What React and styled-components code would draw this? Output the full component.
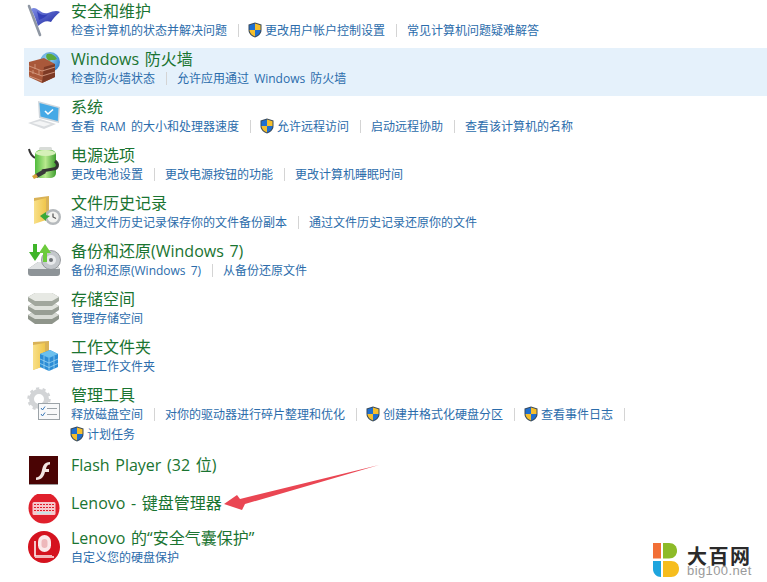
import React from 'react';
import styled, { createGlobalStyle } from 'styled-components';

const GlobalStyle = createGlobalStyle`
  html, body {
    margin: 0;
    padding: 0;
    background: #ffffff;
    overflow: hidden;
  }
  body {
    font-family: "Open Sans", "Noto Sans CJK SC", sans-serif;
  }
`;

const Page = styled.div`
  position: relative;
  width: 767px;
  height: 582px;
  overflow: hidden;
`;

const List = styled.div`
  display: flex;
  flex-direction: column;
  padding-left: 24px;
`;

const Row = styled.div`
  display: flex;
  align-items: flex-start;
  height: ${(p) => p.$height || 48}px;
  padding-left: 2px;
  background: ${(p) => (p.$active ? '#e5f1fb' : 'transparent')};
`;

const IconBox = styled.div`
  flex: none;
  width: 36px;
  height: 36px;
  margin: 2px 9px 0 0;
  svg {
    display: block;
  }
`;

const Content = styled.div`
  display: flex;
  flex-direction: column;
  max-width: 565px;
`;

const Title = styled.div`
  font-size: 16px;
  line-height: 23px;
  height: 20px;
  word-spacing: 1.5px;
  color: #1a7431;
  white-space: nowrap;
`;

const Links = styled.div`
  display: flex;
  flex-wrap: wrap;
`;

const LinkItem = styled.div`
  display: flex;
  align-items: center;
  height: 20px;
  font-size: 12px;
  word-spacing: 2px;
  color: #2b6cab;
  white-space: nowrap;

  &:not(:last-child)::after {
    content: '';
    width: 1px;
    height: 13px;
    margin: 0 10px 0 11px;
    background: #d4d4d4;
  }
`;

const ShieldIcon = styled.svg`
  flex: none;
  width: 14px;
  height: 16px;
  margin: 0 3px 0 -1px;
`;

const Arrow = styled.svg`
  position: absolute;
  left: 220px;
  top: 460px;
`;

const Watermark = styled.div`
  position: absolute;
  left: 653px;
  top: 543px;
  display: flex;
  gap: 8px;
`;

const WatermarkText = styled.div`
  display: flex;
  flex-direction: column;
  padding-top: 4px;
`;

const BrandName = styled.div`
  font-family: "Noto Sans CJK SC", sans-serif;
  font-size: 20px;
  font-weight: 700;
  line-height: 17px;
  letter-spacing: 1.5px;
  color: #2a2a2a;
`;

const BrandUrl = styled.div`
  font-family: "Liberation Sans", sans-serif;
  font-size: 13px;
  line-height: 13px;
  letter-spacing: 0.4px;
  color: #9a9a9a;
`;

function Shield() {
  return (
    <ShieldIcon viewBox="0 0 14 16">
      <path d="M7 0.5 L13.5 2.5 V8 C13.5 12 10 14.5 7 15.5 C4 14.5 0.5 12 0.5 8 V2.5 Z" fill="#3a4a5a" />
      <path d="M7 1.5 V8 H1.5 V3.2 Z" fill="#1f6fd0" />
      <path d="M7 1.5 L12.5 3.2 V8 H7 Z" fill="#f6bf2c" />
      <path d="M1.5 8 H7 V14.4 C4.5 13.5 1.7 11.5 1.5 8 Z" fill="#f6bf2c" />
      <path d="M7 8 H12.5 C12.3 11.5 9.5 13.5 7 14.4 Z" fill="#1f6fd0" />
    </ShieldIcon>
  );
}

const Svg = ({ children }) => (
  <svg width="36" height="36" viewBox="0 0 36 36">
    {children}
  </svg>
);

const icons = {
  flag: (
    <Svg>
      <defs>
        <linearGradient id="flagBlue" x1="0" y1="0" x2="1" y2="1">
          <stop offset="0" stopColor="#7f8ee6" />
          <stop offset="1" stopColor="#1c26a0" />
        </linearGradient>
      </defs>
      <path d="M3 4 L14 33" stroke="#8f97a3" strokeWidth="2.6" strokeLinecap="round" />
      <path d="M5 7 C11 3 14 13 22 11 C27 9 31 8 34 10 C30 13 27 17 25 20 C20 18 17 20 12 24 C10 18 8 12 5 7 Z" fill="url(#flagBlue)" />
      <path d="M11 9 C14 13 18 14 22 12 C20 15 16 17 13 18 Z" fill="#3440b8" />
    </Svg>
  ),
  firewall: (
    <Svg>
      <defs>
        <radialGradient id="globe" cx="0.4" cy="0.35" r="0.8">
          <stop offset="0" stopColor="#9fd8f5" />
          <stop offset="1" stopColor="#1f72c4" />
        </radialGradient>
      </defs>
      <circle cx="24" cy="12" r="10" fill="url(#globe)" />
      <path d="M21 4 C25 3 29 5 31 9 C28 11 25 9 23 11 C21 9 19 7 21 4 Z" fill="#5aa83c" />
      <path d="M3 12 L18 8 L29 14 L29 27 L16 33 L3 27 Z" fill="#a9583a" />
      <path d="M18 17 L29 14 L29 27 L16 33 Z" fill="#7d3a25" />
      <path d="M3 16 L16 21 M3 21 L16 26 M3 26 L16 31 M9 14 V19 M13 20 V25 M7 20 V24 M16 21 L29 17 M16 26 L29 22" stroke="#d49a80" strokeWidth="0.9" fill="none" />
    </Svg>
  ),
  system: (
    <Svg>
      <path d="M12 3 L34 9 L33 25 L13 20 Z" fill="#cfd6dc" />
      <path d="M13.5 5 L32.5 10 L31.8 23 L14.5 18.5 Z" fill="#45a9e6" />
      <path d="M19 13 L22 16 L27 11.5" stroke="#ffffff" strokeWidth="1.6" fill="none" />
      <path d="M2 25 L14 21 L30 26 L18 31 Z" fill="#d9dcdf" />
      <path d="M6 25 L14 23 L25 26 L18 28.5 Z" fill="#f4f5f6" />
    </Svg>
  ),
  power: (
    <Svg>
      <defs>
        <linearGradient id="battery" x1="0" y1="0" x2="1" y2="0">
          <stop offset="0" stopColor="#4fbb3c" />
          <stop offset="0.5" stopColor="#b8e98e" />
          <stop offset="1" stopColor="#3f9f30" />
        </linearGradient>
      </defs>
      <path d="M3 3 C4 8 6 10 9 12" stroke="#333" strokeWidth="2" fill="none" />
      <rect x="13" y="1" width="13" height="4" rx="1.5" fill="#d8dcd8" />
      <rect x="9" y="4" width="21" height="28" rx="5" fill="url(#battery)" />
      <ellipse cx="19.5" cy="7" rx="10" ry="3" fill="#d5f0b8" />
      <path d="M29 15 C33 18 32 23 27 23 L16 25" stroke="#333" strokeWidth="3" fill="none" />
      <path d="M8 29 L18 23 L20 27 L11 32 Z" fill="#3a3a3a" />
      <path d="M6 30 L10 28 L12 31 L8 33 Z" fill="#d6a23a" />
    </Svg>
  ),
  history: (
    <Svg>
      <defs>
        <linearGradient id="folderA" x1="0" y1="0" x2="1" y2="0">
          <stop offset="0" stopColor="#f8e08a" />
          <stop offset="1" stopColor="#f0c64a" />
        </linearGradient>
      </defs>
      <path d="M8 4 L23 2 V22 L8 29 Z" fill="#d9b257" />
      <path d="M8 7 L20 4 V26 L8 30 Z" fill="url(#folderA)" />
      <circle cx="27" cy="23" r="8" fill="#b5b9bc" />
      <circle cx="27" cy="23" r="5.6" fill="#f3f3f0" />
      <path d="M27 19.5 V23 L30 24.5" stroke="#555" strokeWidth="1.2" fill="none" />
      <path d="M14 22 L20 18 V21 L24 22 L20 25 V27 Z" fill="#3aa83a" />
    </Svg>
  ),
  backup: (
    <Svg>
      <path d="M2 27 L12 20 H28 L34 27 V31 C34 33 33 34 31 34 H5 C3 34 2 33 2 31 Z" fill="#8e9498" />
      <path d="M2 27 L12 20 H28 L34 27 Z" fill="#dfe2e3" />
      <circle cx="25" cy="18" r="9.5" fill="#c3c7cb" stroke="#85898d" strokeWidth="0.8" />
      <circle cx="25" cy="18" r="5" fill="#e8eaec" />
      <circle cx="25" cy="18" r="2" fill="#6d7276" />
      <path d="M7 2 V10 H3 L9 19 L15 10 H11 V2 Z" fill="#3fb52a" />
      <path d="M17 20 V11 H13 L19 2 L25 11 H21 V20 Z" fill="#6ccb3c" />
    </Svg>
  ),
  storage: (
    <Svg>
      <path d="M2 25 L9 21 H26 L33 25 V29 L26 34 H9 L2 29 Z" fill="#8f958b" />
      <path d="M2 25 L9 21 H26 L33 25 L26 29 H9 Z" fill="#d8dbd5" />
      <path d="M2 16 L9 12 H26 L33 16 V20 L26 25 H9 L2 20 Z" fill="#989e94" />
      <path d="M2 16 L9 12 H26 L33 16 L26 20 H9 Z" fill="#dfe2dc" />
      <path d="M2 7 L9 3 H26 L33 7 V11 L26 16 H9 L2 11 Z" fill="#a1a79d" />
      <path d="M2 7 L9 3 H26 L33 7 L26 11 H9 Z" fill="#e7e9e4" />
    </Svg>
  ),
  work: (
    <Svg>
      <defs>
        <linearGradient id="folderB" x1="0" y1="0" x2="1" y2="0">
          <stop offset="0" stopColor="#f8e08a" />
          <stop offset="1" stopColor="#f0c64a" />
        </linearGradient>
      </defs>
      <path d="M7 4 L23 3 V26 L7 32 Z" fill="#d9b257" />
      <path d="M7 7 L19 5 V28 L7 32 Z" fill="url(#folderB)" />
      <path d="M14 16 L24 12 L32 16 L32 29 L23 33 L14 29 Z" fill="#2d8dd6" />
      <path d="M14 16 L23 20 L32 16 L24 12 Z" fill="#6cc0ee" />
      <path d="M23 20 V33 M18 18 V31 M28 18 V31 M14 21 L23 25 L32 21 M14 25.5 L23 29.5 L32 25.5" stroke="#a8dcf5" strokeWidth="0.7" fill="none" />
    </Svg>
  ),
  admin: (
    <Svg>
      <circle cx="13" cy="13" r="7.5" fill="none" stroke="#d2d4d6" strokeWidth="5" />
      <circle cx="13" cy="13" r="10.5" fill="none" stroke="#d2d4d6" strokeWidth="2.4" strokeDasharray="3.2 3.4" />
      <rect x="12.5" y="17.5" width="21" height="16" fill="#f8f9fa" stroke="#9ca3a8" />
      <path d="M15 22 L16.5 24 L19 20.5 M15 28 L16.5 30 L19 26.5" stroke="#3a78b8" strokeWidth="1" fill="none" />
      <path d="M21 22.5 H31 M21 28.5 H31" stroke="#9ca3a8" strokeWidth="1" />
    </Svg>
  ),
  flash: (
    <Svg>
      <rect x="3" y="0" width="29" height="28" fill="#4a0404" />
      <path d="M3 28 H32 V29 H3 Z" fill="#9a9a9a" />
      <path d="M24 6 C18 6 17 10 16 14 C15 18 14 21 10 21.5 V24 C16 24 18 20 19 16 H23 V13 H20 C20.5 10 21.5 8.8 24 8.6 Z" fill="#f2e6e2" />
    </Svg>
  ),
  keyboard: (
    <Svg>
      <circle cx="18" cy="14" r="15.5" fill="#e0202c" />
      <rect x="6.5" y="8" width="23" height="13" rx="1.5" fill="#f6c9cc" />
      <path d="M8 10.5 H28 M8 13.5 H28 M8 16.5 H28" stroke="#e0202c" strokeWidth="1" strokeDasharray="2 1" />
      <rect x="11" y="18" width="14" height="1.6" fill="#bfe8ea" />
    </Svg>
  ),
  lock: (
    <Svg>
      <circle cx="18" cy="18" r="16" fill="#d5131f" />
      <path d="M9 12 V27 H26" stroke="#ffffff" strokeWidth="1.6" fill="none" opacity="0.95" />
      <path d="M9 27 H28 V29 H9 Z" fill="#f3b7ba" />
      <rect x="12" y="6" width="13" height="17" rx="6.5" fill="#fbe9ea" />
      <rect x="15.5" y="10" width="6" height="9" rx="3" fill="#eeb8bb" />
    </Svg>
  ),
};

const rows = [
  {
    icon: 'flag',
    title: '安全和维护',
    links: [
      { text: '检查计算机的状态并解决问题' },
      { text: '更改用户帐户控制设置', shield: true },
      { text: '常见计算机问题疑难解答' },
    ],
  },
  {
    icon: 'firewall',
    title: 'Windows 防火墙',
    active: true,
    links: [{ text: '检查防火墙状态' }, { text: '允许应用通过 Windows 防火墙' }],
  },
  {
    icon: 'system',
    title: '系统',
    links: [
      { text: '查看 RAM 的大小和处理器速度' },
      { text: '允许远程访问', shield: true },
      { text: '启动远程协助' },
      { text: '查看该计算机的名称' },
    ],
  },
  {
    icon: 'power',
    title: '电源选项',
    links: [{ text: '更改电池设置' }, { text: '更改电源按钮的功能' }, { text: '更改计算机睡眠时间' }],
  },
  {
    icon: 'history',
    title: '文件历史记录',
    links: [{ text: '通过文件历史记录保存你的文件备份副本' }, { text: '通过文件历史记录还原你的文件' }],
  },
  {
    icon: 'backup',
    title: '备份和还原(Windows 7)',
    links: [{ text: '备份和还原(Windows 7)' }, { text: '从备份还原文件' }],
  },
  { icon: 'storage', title: '存储空间', links: [{ text: '管理存储空间' }] },
  { icon: 'work', title: '工作文件夹', links: [{ text: '管理工作文件夹' }] },
  {
    icon: 'admin',
    title: '管理工具',
    height: 70,
    links: [
      { text: '释放磁盘空间' },
      { text: '对你的驱动器进行碎片整理和优化' },
      { text: '创建并格式化硬盘分区', shield: true },
      { text: '查看事件日志', shield: true },
      { text: '计划任务', shield: true },
    ],
  },
  { icon: 'flash', title: 'Flash Player (32 位)', height: 38, links: [] },
  { icon: 'keyboard', title: 'Lenovo - 键盘管理器', height: 35, links: [] },
  {
    icon: 'lock',
    title: 'Lenovo 的“安全气囊保护”',
    links: [{ text: '自定义您的硬盘保护' }],
  },
];

function App() {
  return (
    <Page>
      <GlobalStyle />
      <List>
        {rows.map((row) => (
          <Row key={row.title} $active={row.active} $height={row.height}>
            <IconBox>{icons[row.icon]}</IconBox>
            <Content>
              <Title>{row.title}</Title>
              <Links>
                {row.links.map((link) => (
                  <LinkItem key={link.text}>
                    {link.shield && <Shield />}
                    {link.text}
                  </LinkItem>
                ))}
              </Links>
            </Content>
          </Row>
        ))}
      </List>
      <Arrow width="165" height="55" viewBox="0 0 165 55">
        <path d="M4 44 L17 35 L20 39 L159 5 L25 44 L22 50 Z" fill="#ea4653" />
      </Arrow>
      <Watermark>
        <svg width="26" height="34" viewBox="0 0 26 34">
          <rect x="0" y="0" width="8" height="15.5" fill="#f26f36" />
          <path d="M10 0 H16 C21 0 24 3 24 8 C24 12 21 15.5 16 15.5 H10 Z" fill="#8dbb28" />
          <path d="M0 18 H8 V34 C3.5 34 0 30.5 0 26 Z" fill="#1ea5de" />
          <path d="M10 18 H18 C23 18 26 21 26 26 C26 30.5 22.5 34 18 34 H10 Z" fill="#f6bd1e" />
        </svg>
        <WatermarkText>
          <BrandName>大百网</BrandName>
          <BrandUrl>big100.net</BrandUrl>
        </WatermarkText>
      </Watermark>
    </Page>
  );
}

export default App;
